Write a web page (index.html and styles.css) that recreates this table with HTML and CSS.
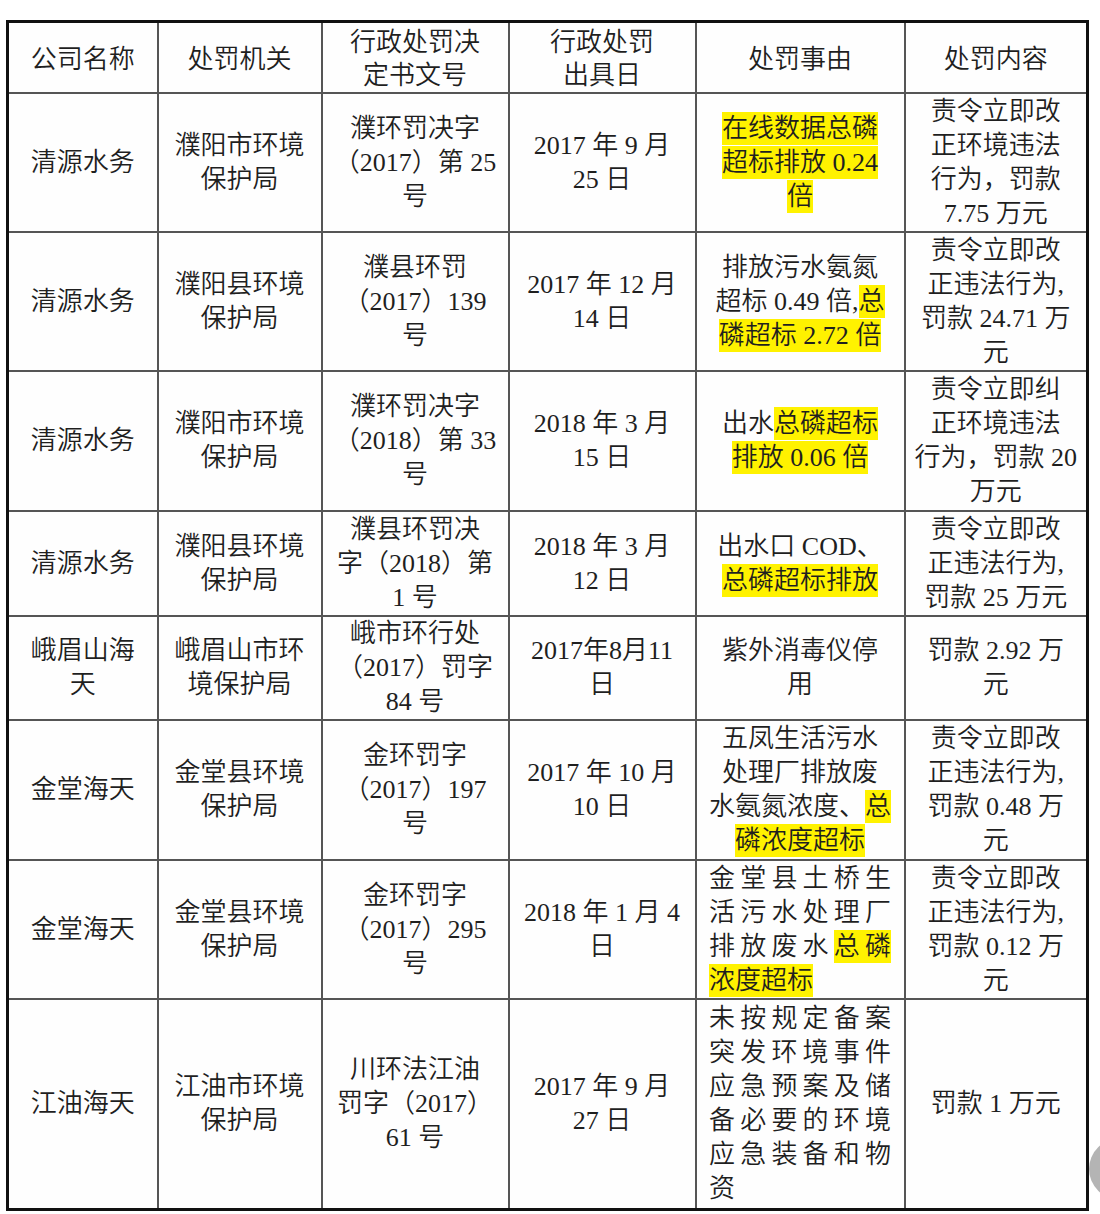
FILE: index.html
```html
<!DOCTYPE html>
<html lang="zh-CN">
<head>
<meta charset="utf-8">
<title>行政处罚</title>
<link rel="stylesheet" href="styles.css">
</head>
<body>
<table class="tbl">
  <colgroup>
    <col class="c1"><col class="c2"><col class="c3"><col class="c4"><col class="c5"><col class="c6">
  </colgroup>
  <tr class="rh">
    <td>公司名称</td>
    <td>处罚机关</td>
    <td>行政处罚决<br>定书文号</td>
    <td>行政处罚<br>出具日</td>
    <td>处罚事由</td>
    <td>处罚内容</td>
  </tr>
  <tr class="r139">
    <td>清源水务</td>
    <td>濮阳市环境<br>保护局</td>
    <td>濮环罚决字<br>（2017）第 25<br>号</td>
    <td>2017 年 9 月<br>25 日</td>
    <td><span class="hl">在线数据总磷</span><br><span class="hl">超标排放 0.24</span><br><span class="hl">倍</span></td>
    <td>责令立即改<br>正环境违法<br>行为，罚款<br>7.75 万元</td>
  </tr>
  <tr class="r139">
    <td>清源水务</td>
    <td>濮阳县环境<br>保护局</td>
    <td>濮县环罚<br>（2017）139<br>号</td>
    <td>2017 年 12 月<br>14 日</td>
    <td>排放污水氨氮<br>超标 0.49 倍,<span class="hl">总</span><br><span class="hl">磷超标 2.72 倍</span></td>
    <td>责令立即改<br>正违法行为,<br>罚款 24.71 万<br>元</td>
  </tr>
  <tr class="r140">
    <td>清源水务</td>
    <td>濮阳市环境<br>保护局</td>
    <td>濮环罚决字<br>（2018）第 33<br>号</td>
    <td>2018 年 3 月<br>15 日</td>
    <td>出水<span class="hl">总磷超标</span><br><span class="hl">排放 0.06 倍</span></td>
    <td>责令立即纠<br>正环境违法<br>行为，罚款 20<br>万元</td>
  </tr>
  <tr class="r105">
    <td>清源水务</td>
    <td>濮阳县环境<br>保护局</td>
    <td>濮县环罚决<br>字（2018）第<br>1 号</td>
    <td>2018 年 3 月<br>12 日</td>
    <td>出水口 COD、<br><span class="hl">总磷超标排放</span></td>
    <td>责令立即改<br>正违法行为,<br>罚款 25 万元</td>
  </tr>
  <tr class="r104">
    <td>峨眉山海<br>天</td>
    <td>峨眉山市环<br>境保护局</td>
    <td>峨市环行处<br>（2017）罚字<br>84 号</td>
    <td>2017年8月11<br>日</td>
    <td>紫外消毒仪停<br>用</td>
    <td>罚款 2.92 万<br>元</td>
  </tr>
  <tr class="r140">
    <td>金堂海天</td>
    <td>金堂县环境<br>保护局</td>
    <td>金环罚字<br>（2017）197<br>号</td>
    <td>2017 年 10 月<br>10 日</td>
    <td>五凤生活污水<br>处理厂排放废<br>水氨氮浓度、<span class="hl">总</span><br><span class="hl">磷浓度超标</span></td>
    <td>责令立即改<br>正违法行为,<br>罚款 0.48 万<br>元</td>
  </tr>
  <tr class="r139">
    <td>金堂海天</td>
    <td>金堂县环境<br>保护局</td>
    <td>金环罚字<br>（2017）295<br>号</td>
    <td>2018 年 1 月 4<br>日</td>
    <td>
      <div class="jbox">
        <div class="jl">金堂县土桥生</div>
        <div class="jl">活污水处理厂</div>
        <div class="jl">排放废水<span class="hl">总磷</span></div>
        <div class="ll"><span class="hl">浓度超标</span></div>
      </div>
    </td>
    <td>责令立即改<br>正违法行为,<br>罚款 0.12 万<br>元</td>
  </tr>
  <tr class="r210">
    <td>江油海天</td>
    <td>江油市环境<br>保护局</td>
    <td>川环法江油<br>罚字（2017）<br>61 号</td>
    <td>2017 年 9 月<br>27 日</td>
    <td>
      <div class="jbox">
        <div class="jl">未按规定备案</div>
        <div class="jl">突发环境事件</div>
        <div class="jl">应急预案及储</div>
        <div class="jl">备必要的环境</div>
        <div class="jl">应急装备和物</div>
        <div class="ll">资</div>
      </div>
    </td>
    <td>罚款 1 万元</td>
  </tr>
</table>
<div class="float-btn"></div>
</body>
</html>
```
FILE: styles.css
```css
html, body {
  margin: 0;
  padding: 0;
  background: #ffffff;
}

body {
  width: 1100px;
  height: 1214px;
  overflow: hidden;
  position: relative;
  font-family: "Liberation Serif", "Noto Sans CJK SC", serif;
  font-weight: 350;
  color: #1f1f1f;
}

.tbl {
  margin: 20px 0 0 6px;
  border-collapse: collapse;
  table-layout: fixed;
  width: 1083px;
  border: 3px solid #111111;
  font-size: 26px;
  line-height: 34px;
}

.c1 { width: 150px; }
.c2 { width: 164px; }
.c3 { width: 187px; }
.c4 { width: 187px; }
.c5 { width: 209px; }
.c6 { width: 183px; }

.tbl td {
  border: 2px solid #555555;
  padding: 0;
  text-align: center;
  vertical-align: middle;
  white-space: nowrap;
  background: #fefefe;
}

.rh td {
  padding-top: 3px;
  line-height: 33px;
}

.rh { height: 71px; }
.r139 { height: 139px; }
.r140 { height: 140px; }
.r105 { height: 105px; }
.r104 { height: 104px; }
.r210 { height: 210px; }

.hl {
  background: #fff200;
  padding: 2px 0;
}

.jbox {
  width: 182px;
  margin: 0 auto;
  text-align: left;
}

.jl {
  text-align: justify;
  text-align-last: justify;
}

.ll {
  text-align: left;
}

.float-btn {
  position: absolute;
  left: 1089px;
  top: 1138px;
  width: 64px;
  height: 62px;
  border-radius: 50%;
  background: #b4b4b4;
}
```
